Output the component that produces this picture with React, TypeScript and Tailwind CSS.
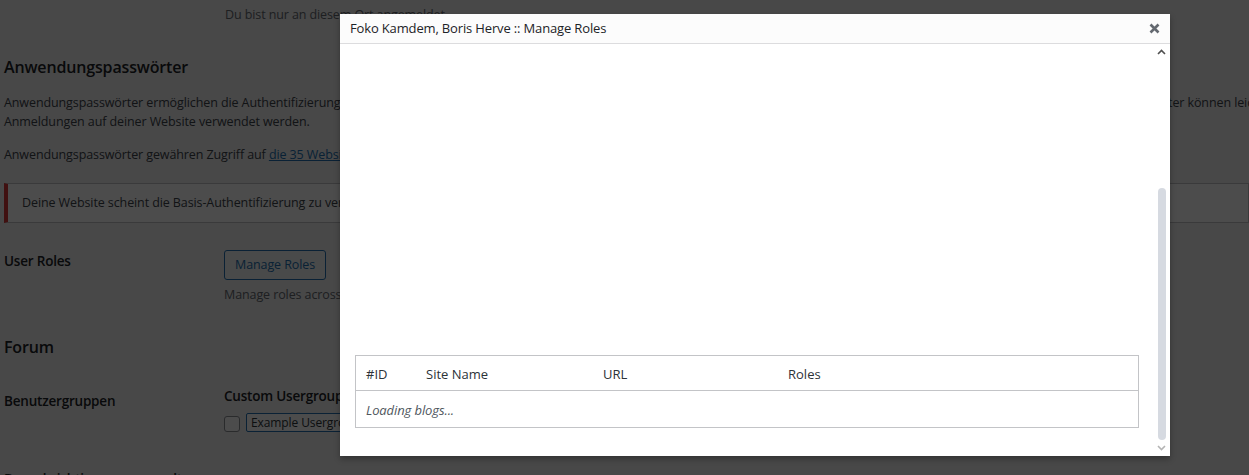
import { ReactNode } from "react";

function FormRow({ label, children, labelClass = "" }: { label: string; children: ReactNode; labelClass?: string }) {
  return (
    <div className="flex">
      <div className={`w-[220px] shrink-0 text-[13.5px] font-semibold leading-[20px] tracking-[-0.2px] text-[#1d2327] ${labelClass}`}>
        {label}
      </div>
      <div className="min-w-0 flex-1">{children}</div>
    </div>
  );
}

function ProfilePage() {
  return (
    <div className="pl-1">
      <div className="h-[30px] pl-[221px] leading-[30px] text-[#646970]">Du bist nur an diesem Ort angemeldet.</div>

      <h2 className="mt-[24px] h-[26px] text-[16px] font-semibold leading-[26px] tracking-[-0.15px] text-[#1d2327]">
        Anwendungspasswörter
      </h2>

      <p className="mt-[13px] leading-[19px]">
        <span className="block whitespace-nowrap">
          Anwendungspasswörter ermöglichen die Authentifizierung über nicht-interaktive Systeme, wie XML-RPC oder die REST-API, ohne dass du dein tatsächliches Passwort angeben musst. Anwendungspasswörter können leicht widerrufen werden. Sie können nicht für traditionelle
        </span>
        <span className="block">Anmeldungen auf deiner Website verwendet werden.</span>
      </p>

      <p className="mt-[14px] leading-[19px]">
        Anwendungspasswörter gewähren Zugriff auf{" "}
        <a className="text-[#2271b1] underline">die 35 Websites in diesem Netzwerk, auf die du Zugriff hast</a>.
      </p>

      <div className="mt-[19px] flex h-[40px] items-center border border-l-4 border-[#c3c4c7] border-l-[#d63638] bg-white pl-[14px]">
        Deine Website scheint die Basis-Authentifizierung zu verwenden, die momentan nicht mit Anwendungspasswörtern kompatibel ist.
      </div>

      <div className="mt-[27px]">
        <FormRow label="User Roles" labelClass="pt-[1px]">
          <button className="h-[30px] rounded-[3px] border border-[#2271b1] bg-[#f6f7f7] px-[10px] text-[2271b1] text-[#2271b1]">
            Manage Roles
          </button>
          <div className="mt-[5px] leading-[19px] text-[#646970]">Manage roles across all sites in the network.</div>
        </FormRow>
      </div>

      <h2 className="mt-[30px] h-[26px] text-[16px] font-semibold leading-[26px] tracking-[-0.15px] text-[#1d2327]">Forum</h2>

      <div className="mt-[26px]">
        <FormRow label="Benutzergruppen" labelClass="pt-[5px]">
          <div className="text-[13.5px] font-semibold leading-[20px] tracking-[-0.2px] text-[#1d2327]">Custom Usergroups</div>
          <div className="mt-[7px] flex items-center gap-[6px]">
            <span className="mt-[2px] block h-[16px] w-[16px] rounded-[3px] border border-[#8c8f94] bg-white" />
            <span className="flex h-[19px] items-center rounded-[2px] border border-[#2271b1] bg-white px-[4px] text-[12px] text-[#2c3338]">
              Example Usergroup
            </span>
          </div>
        </FormRow>
      </div>

      <div className="mt-[37px]">
        <FormRow label="Benachrichtigungen verwalten">
          <div />
        </FormRow>
      </div>
    </div>
  );
}

function ChevronUp({ className }: { className: string }) {
  return (
    <svg width="9" height="6" viewBox="0 0 9 6" className={className}>
      <path d="M1 5 L4.5 1.5 L8 5" fill="none" stroke="currentColor" strokeWidth="1.6" />
    </svg>
  );
}

function ChevronDown({ className }: { className: string }) {
  return (
    <svg width="9" height="6" viewBox="0 0 9 6" className={className}>
      <path d="M1 1 L4.5 4.5 L8 1" fill="none" stroke="currentColor" strokeWidth="1.6" />
    </svg>
  );
}

const columns = [
  { title: "#ID", width: "w-[60px]" },
  { title: "Site Name", width: "w-[177px]" },
  { title: "URL", width: "w-[185px]" },
  { title: "Roles", width: "flex-1" },
];

function RolesModal() {
  return (
    <div className="absolute left-[340px] top-[14px] flex h-[442px] w-[830px] flex-col bg-white tracking-normal shadow-[0_3px_6px_rgba(0,0,0,0.3)]">
      <div className="flex h-[30px] shrink-0 items-center justify-between border-b border-[#dcdcde] bg-[#fcfcfc] px-[10px]">
        <span className="pt-[1px] text-[13px] tracking-[-0.15px] text-[#1d2327]">Foko Kamdem, Boris Herve :: Manage Roles</span>
        <svg width="11" height="11" viewBox="0 0 11 11" className="text-[#646970]">
          <path d="M1.5 1.5 L9.5 9.5 M9.5 1.5 L1.5 9.5" stroke="currentColor" strokeWidth="2.6" />
        </svg>
      </div>

      <div className="flex min-h-0 flex-1">
        <div className="flex flex-1 flex-col justify-end pb-[28px] pl-[15px] pr-[14px]">
          <div className="border border-[#c3c4c7] text-[13px] text-[#2c3338]">
            <div className="flex h-[35px] items-center border-b border-[#c3c4c7] pt-[3px]">
              {columns.map((col) => (
                <div key={col.title} className={`${col.width} pl-[10px]`}>
                  {col.title}
                </div>
              ))}
            </div>
            <div className="flex h-[36px] items-center pl-[10px] pt-[3px] italic tracking-[-0.1px] text-[#50575e]">Loading blogs...</div>
          </div>
        </div>

        <div className="flex w-[17px] shrink-0 flex-col items-center">
          <div className="flex h-[16px] items-center justify-center">
            <ChevronUp className="text-[#505050]" />
          </div>
          <div className="mt-[128px] h-[252px] w-[8px] rounded-full bg-[#d6dae1]" />
          <div className="mt-[5px]">
            <ChevronDown className="text-[#b4b4b4]" />
          </div>
        </div>
      </div>
    </div>
  );
}

export default function App() {
  return (
    <div className="relative h-[475px] w-[1249px] overflow-hidden bg-[#f0f0f1] font-['Segoe_UI','Open_Sans',sans-serif] text-[12.5px] tracking-[-0.1px] text-[#3c434a]">
      <ProfilePage />
      <div className="absolute inset-0 bg-black/70" />
      <RolesModal />
    </div>
  );
}
